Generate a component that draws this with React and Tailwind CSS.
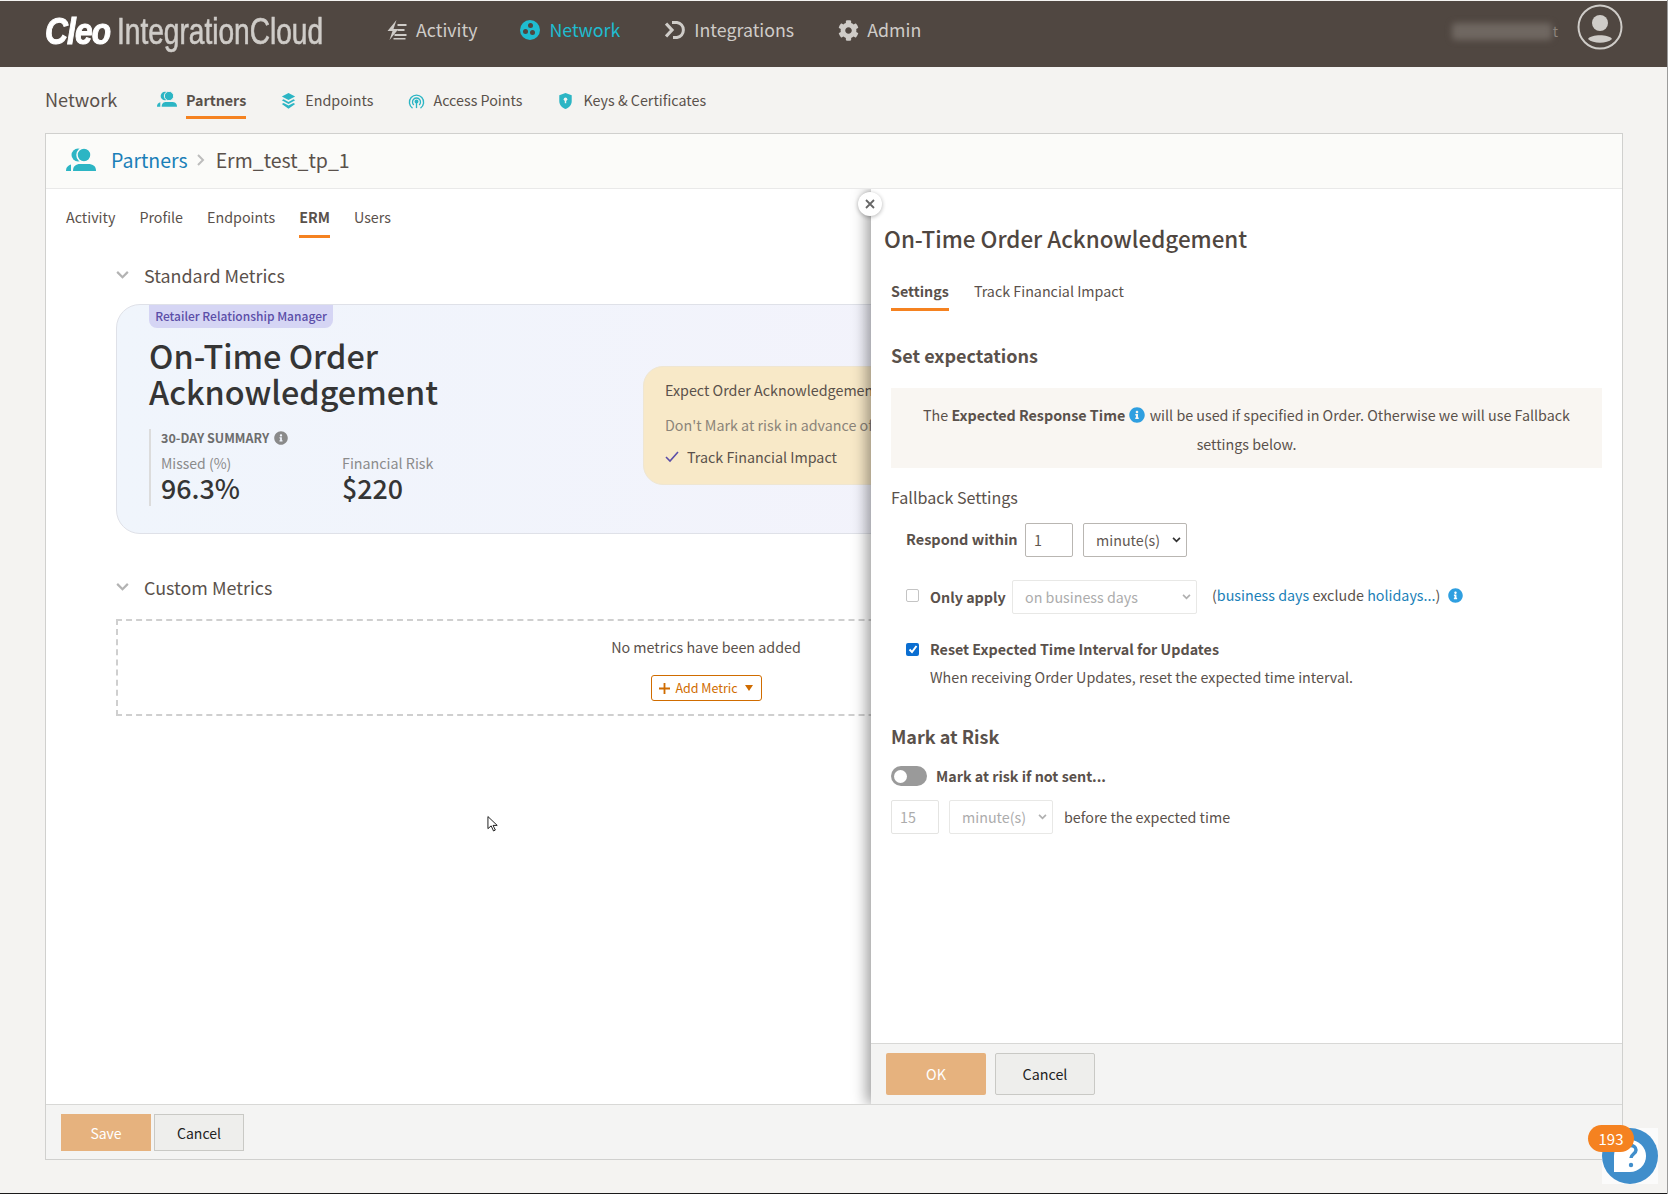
import React from "react";
import { FaCog, FaInfoCircle } from "react-icons/fa";

const ActivityIcon = () => (
  <svg viewBox="2 1 19 20" className="w-5 h-5" fill="#cfccc8">
    <path d="M11 1 2 12h5L4 21l9-11H8z" />
    <path d="M12 5h9v2h-9zM12 10h7v2h-7zM9 15h12v2H9zM8 19h12v1.6H8z" />
  </svg>
);

const NetworkIcon = () => (
  <svg viewBox="0 0 20 20" className="w-5 h-5">
    <circle cx="10" cy="10" r="10" fill="#1fbcd0" />
    <circle cx="10.5" cy="5.5" r="2.5" fill="#4f4640" />
    <circle cx="5.5" cy="11.5" r="2.5" fill="#4f4640" />
    <circle cx="12.5" cy="12.5" r="2.5" fill="#4f4640" />
  </svg>
);

const IntegrationsIcon = () => (
  <svg viewBox="0 0 22 20" className="w-[22px] h-5" fill="none" stroke="#cfccc8" strokeWidth="3">
    <path d="M1 3.5 7 10l-6 6.5" strokeWidth="3.2" />
    <path d="M7 2.5h5a7.6 7.6 0 0 1 0 15H8" />
  </svg>
);

const PartnersIcon = ({ className, bg }) => (
  <svg viewBox="0 0 30 23" className={className} fill="#2cb5c4">
    <circle cx="12" cy="7" r="6.500" />
    <ellipse cx="18" cy="7" rx="7" ry="7" stroke={bg} strokeWidth="1.500" />
    <path d="M0 23c0-3 1-5 5-6.500V23z" />
    <path d="M7 23c0-5 3-7 7-7h8c5 0 8 2 8 7z" />
  </svg>
);

const EndpointsIcon = () => (
  <svg viewBox="0 0 16 18" className="w-[15px] h-4" fill="#2cb5c4">
    <path d="M8 0l7.500 4L8 8 .5 4z" />
    <path d="M2.500 7 8 10l5.500-3 2 1.200L8 12.300.5 8.200z" />
    <path d="M2.500 11.200 8 14.200l5.500-3 2 1.100L8 17.800.5 12.300z" />
  </svg>
);

const AccessIcon = () => (
  <svg viewBox="0 0 18 18" className="w-[17px] h-4" fill="none" stroke="#2cb5c4" strokeWidth="1.500">
    <path d="M4.500 17A8 8 0 1 1 13.500 17" />
    <path d="M6 13.500a4.500 4.500 0 1 1 6 0" />
    <circle cx="9" cy="9.500" r="1.500" fill="#2cb5c4" />
    <path d="M9 11v6" />
  </svg>
);

const KeysIcon = () => (
  <svg viewBox="0 0 14 18" className="w-[13px] h-4">
    <path d="M7 0l7 2.500V9c0 4.500-3 7.500-7 9-4-1.500-7-4.500-7-9V2.500z" fill="#2cb5c4" />
    <circle cx="7" cy="7" r="2" fill="#f4f3f1" />
    <rect x="6.200" y="7.500" width="1.600" height="4" fill="#f4f3f1" />
  </svg>
);

const Chevron = () => (
  <svg viewBox="0 0 14 9" className="w-[13px] h-2" fill="none" stroke="#b3b3b3" strokeWidth="2.500">
    <path d="M1 1l6 6 6-6" />
  </svg>
);

const SelectBox = ({ value, width, disabled }) => (
  <div
    className={
      "h-[34px] flex items-center justify-between pl-3 pr-[5px] border rounded-[2px] " +
      width +
      (disabled ? " border-[#e8e8e6] text-[#acacac]" : " border-[#b9b6b2] text-[#5f5752]")
    }
  >
    <span>{value}</span>
    <svg viewBox="0 0 10 7" className="w-[9px] h-[6px]" fill="none" stroke={disabled ? "#b0b0b0" : "#333"} strokeWidth="2">
      <path d="M1 1l4 4 4-4" />
    </svg>
  </div>
);

const App = () => {
  return (
    <div className="relative w-[1668px] h-[1194px] overflow-hidden bg-[#f4f3f1] text-[14.3px] leading-[20px] text-[#5a514b] font-['Noto_Sans_CJK_SC',sans-serif] border-r border-[#9b9b9b]">
      {/* top nav */}
      <div className="mt-px h-[66px] bg-[#504741] flex items-start text-[17.8px] text-[#cfccc8]">
        <div className="ml-[45px] mt-[6px] w-[277px] h-[50px] flex items-center font-['Liberation_Sans',sans-serif] text-[36px] leading-[44px] whitespace-nowrap">
          <span className="w-[72px] text-white font-bold italic origin-left scale-x-[0.88] tracking-[-1px] [-webkit-text-stroke:1px_white]">Cleo</span>
          <span className="origin-left scale-x-[0.78] [-webkit-text-stroke:0.6px_#cfccc8]">IntegrationCloud</span>
        </div>
        <div className="ml-[65px] mt-[18px] flex items-center gap-[9px] h-[22px]">
          <ActivityIcon />
          <span className="-mt-[2px]">Activity</span>
        </div>
        <div className="ml-[43px] mt-[18px] flex items-center gap-[9px] h-[22px] text-[#1fbcd0]">
          <NetworkIcon />
          <span className="-mt-[2px]">Network</span>
        </div>
        <div className="ml-[45px] mt-[18px] flex items-center gap-[7px] h-[22px]">
          <IntegrationsIcon />
          <span className="-mt-[2px]">Integrations</span>
        </div>
        <div className="ml-[44px] mt-[18px] flex items-center gap-2 h-[22px]">
          <FaCog className="w-[21px] h-[21px]" />
          <span className="-mt-[2px]">Admin</span>
        </div>
        <div className="ml-auto mt-[22px] w-[100px] h-[17px] bg-[#6f6761] rounded-[4px] blur-[3px]"></div>
        <span className="mt-[20px] ml-px text-[#8f8882] text-[14px]">t</span>
        <svg viewBox="0 0 46 46" className="ml-[19px] mr-[44px] mt-[3px] w-[46px] h-[46px]">
          <circle cx="23" cy="23" r="21.500" fill="none" stroke="#cfccc8" strokeWidth="2" />
          <circle cx="23" cy="19" r="8" fill="#cfccc8" />
          <path d="M11 35c3-5 21-5 24 0-5 5-19 5-24 0z" fill="#cfccc8" />
        </svg>
      </div>

      {/* second nav */}
      <div className="h-[66px] pl-[45px] flex items-start">
        <span className="mt-[20px] w-[72px] text-[18.1px] leading-[24px]">Network</span>
        <div className="ml-[40px] mt-[24px] flex items-start gap-[9px]">
          <PartnersIcon bg="#f4f3f1" className="w-5 h-4" />
          <span className="font-bold leading-[18px] border-b-[3px] border-[#f58220] h-[28px] -mb-[4px]">Partners</span>
        </div>
        <div className="ml-[35px] mt-[24px] flex items-center gap-[9px]">
          <EndpointsIcon />
          <span className="-mt-[1px]">Endpoints</span>
        </div>
        <div className="ml-[35px] mt-[24px] flex items-center gap-[8px]">
          <AccessIcon />
          <span className="-mt-[1px]">Access Points</span>
        </div>
        <div className="ml-[37px] mt-[24px] flex items-center gap-[11px]">
          <KeysIcon />
          <span className="-mt-[1px]">Keys &amp; Certificates</span>
        </div>
      </div>

      {/* main card */}
      <div className="relative ml-[45px] w-[1578px] h-[1027px] border border-[#d0d0ce] flex flex-col bg-white">
        <div className="h-[55px] shrink-0 bg-[#fbfbf9] border-b border-[#e9e9e9] flex items-center pl-[20px] text-[19.5px] pb-[3px]">
          <PartnersIcon bg="#fbfbf9" className="w-[30px] h-[23px]" />
          <span className="ml-[15px] text-[#1a7fb8]">Partners</span>
          <svg viewBox="0 0 8 12" className="ml-[9px] w-2 h-3" fill="none" stroke="#bdbdbd" strokeWidth="2">
            <path d="M1 1l5 5-5 5" />
          </svg>
          <span className="ml-[11px]">Erm_test_tp_1</span>
        </div>

        <div className="flex-1 min-h-0 overflow-hidden">
          <div className="pl-[20px] h-[48px] pt-[18px] flex items-start gap-[24px]">
            <span>Activity</span>
            <span>Profile</span>
            <span>Endpoints</span>
            <span className="font-bold h-[31px] border-b-[3px] border-[#f58220]">ERM</span>
            <span>Users</span>
          </div>

          <div className="pl-[70px] mt-[25px] flex items-center h-[26px] text-[17.9px] leading-[26px]">
            <Chevron />
            <span className="ml-[15px]">Standard Metrics</span>
          </div>

          <div className="relative ml-[70px] mt-[16px] w-[1180px] h-[230px] rounded-[24px] border border-[#dfe1e8] bg-gradient-to-r from-[#f0f5fc] to-[#f4f2fb] pl-[32px] flex">
            <div className="w-[494px]">
              <div className="w-[184px] h-[23px] bg-[#d5d5f4] rounded-b-[8px] text-[#5b4ea8] text-[12px] font-medium leading-[22px] text-center whitespace-nowrap">
                Retailer Relationship Manager
              </div>
              <div className="mt-[9px] text-[32.4px] leading-[36px] font-medium text-[#353535] whitespace-nowrap">
                On-Time Order
                <br />
                Acknowledgement
              </div>
              <div className="mt-[20px] h-[77px] border-l-2 border-[#dcdcdc] pl-[10px]">
                <div className="flex items-center gap-[5px] text-[12.5px] font-bold text-[#6d6d6d] h-[18px]">
                  30-DAY SUMMARY
                  <FaInfoCircle className="w-[14px] h-[14px] text-[#8a8a8a]" />
                </div>
                <div className="mt-[7px] flex text-[14px] leading-[18px] text-[#8b8b8b]">
                  <div className="w-[181px]">
                    <div>Missed (%)</div>
                    <div className="text-[26.8px] leading-[30px] mt-[1px] font-medium text-[#353535]">96.3%</div>
                  </div>
                  <div>
                    <div className="text-[14.3px]">Financial Risk</div>
                    <div className="text-[26.8px] leading-[30px] mt-[1px] font-medium text-[#353535]">$220</div>
                  </div>
                </div>
              </div>
            </div>
            <div className="mt-[61px] w-[500px] h-[119px] rounded-[20px] bg-[#f8e9c8] border border-[#efe6d2] pl-[21px] pt-[13px]">
              <div>Expect Order Acknowledgement within 1 minute</div>
              <div className="mt-[15px] text-[#8b8479]">Don't Mark at risk in advance of expected time</div>
              <div className="mt-[12px] flex items-center gap-[8px]">
                <svg viewBox="0 0 14 12" className="w-[14px] h-3" fill="none" stroke="#5b4ea8" strokeWidth="1.600">
                  <path d="M1 6l4 4 8-9" />
                </svg>
                Track Financial Impact
              </div>
            </div>
          </div>

          <div className="pl-[70px] mt-[40px] flex items-center h-[26px] text-[17.9px] leading-[26px]">
            <Chevron />
            <span className="ml-[15px]">Custom Metrics</span>
          </div>

          <div className="ml-[70px] mt-[19px] w-[1180px] h-[97px] border-2 border-dashed border-[#cfcfcf] flex flex-col items-center pt-[16px]">
            <div>No metrics have been added</div>
            <div className="mt-[18px] w-[111px] h-[26px] flex items-center justify-center gap-[5px] rounded-[3px] border border-[#d06c00] text-[#d06c00] text-[12.5px]">
              <svg viewBox="0 0 12 12" className="w-[11px] h-[11px]" fill="none" stroke="#d06c00" strokeWidth="2">
                <path d="M6 0v12M0 6h12" />
              </svg>
              Add Metric
              <svg viewBox="0 0 8 6" className="ml-[2px] w-2 h-[6px]" fill="#d06c00">
                <path d="M0 0h8L4 6z" />
              </svg>
            </div>
          </div>
        </div>

        <div className="h-[55px] shrink-0 bg-[#f4f4f3] border-t border-[#d8d8d6] pl-[15px] pt-[9px] flex gap-[3px] items-start text-[14px]">
          <div className="w-[90px] h-[37px] bg-[#e6b27e] text-white flex items-center justify-center">Save</div>
          <div className="w-[90px] h-[37px] bg-[#eeeeec] border border-[#c9c9c5] text-[#222] flex items-center justify-center">Cancel</div>
        </div>

        {/* slide-over panel */}
        <div className="absolute left-[825px] top-[55px] w-[751px] bottom-[55px] bg-white shadow-[-4px_0_14px_rgba(0,0,0,0.4)] [clip-path:inset(0_0_0_-24px)] flex flex-col">
          <div className="absolute -left-[13px] top-[3px] w-[24px] h-[24px] rounded-full bg-white shadow-[0_1px_4px_rgba(0,0,0,0.3)] flex items-center justify-center">
            <svg viewBox="0 0 10 10" className="w-[10px] h-[10px]" fill="none" stroke="#666" strokeWidth="1.800">
              <path d="M1 1l8 8M9 1l-8 8" />
            </svg>
          </div>
          <div className="flex-1 min-h-0 pl-[13px]">
            <div className="mt-[33px] text-[22.4px] leading-[32px] font-medium text-[#4f4640]">On-Time Order Acknowledgement</div>
            <div className="pl-[7px]">
              <div className="mt-[27px] h-[38px] flex items-start gap-[25px]">
                <span className="font-bold h-[30px] border-b-[3px] border-[#f58220]">Settings</span>
                <span>Track Financial Impact</span>
              </div>
              <div className="mt-[22px] text-[18px] leading-[28px] font-bold">Set expectations</div>
              <div className="mt-[19px] w-[711px] h-[80px] bg-[#f9f6f2] text-center leading-[29px] pt-[12px] px-[20px]">
                The <b>Expected Response Time</b>{" "}
                <FaInfoCircle className="inline mx-[1px] w-4 h-4 text-[#2f9fe0] align-[-2px]" /> will be used if specified in Order. Otherwise we will use Fallback settings below.
              </div>
              <div className="mt-[17px] text-[16.1px] leading-[24px]">Fallback Settings</div>
              <div className="mt-[14px] pl-[15px] flex items-center">
                <span className="font-bold text-[14.5px] w-[119px] -mt-[2px] whitespace-nowrap">Respond within</span>
                <div className="w-[48px] h-[34px] border border-[#b9b6b2] rounded-[2px] pl-[8px] leading-[32px] text-[#5f5752]">1</div>
                <div className="ml-[10px]">
                  <SelectBox value="minute(s)" width="w-[104px]" />
                </div>
              </div>
              <div className="mt-[23px] pl-[15px] flex items-center">
                <div className="w-[13px] h-[13px] border border-[#c4c4c4] rounded-[2px] bg-white -mt-[4px]"></div>
                <span className="ml-[11px] font-bold w-[82px] whitespace-nowrap">Only apply</span>
                <SelectBox value="on business days" width="w-[185px]" disabled />
                <span className="ml-[15px] -mt-[4px] whitespace-nowrap">
                  (<span className="text-[#1a7fb8]">business days</span> exclude <span className="text-[#1a7fb8]">holidays...</span>)
                </span>
                <FaInfoCircle className="ml-[8px] -mt-[3px] w-[15px] h-[15px] text-[#2f9fe0]" />
              </div>
              <div className="mt-[25px] pl-[15px] flex items-center">
                <div className="w-[13px] h-[13px] rounded-[2px] bg-[#0a6ed1] flex items-center justify-center">
                  <svg viewBox="0 0 10 10" className="w-[10px] h-[10px]" fill="none" stroke="white" strokeWidth="2">
                    <path d="M1.500 5.500l2.500 2.500 4.500-6" />
                  </svg>
                </div>
                <span className="ml-[11px] font-bold">Reset Expected Time Interval for Updates</span>
              </div>
              <div className="mt-[8px] pl-[39px]">When receiving Order Updates, reset the expected time interval.</div>
              <div className="mt-[35px] text-[18px] leading-[28px] font-bold">Mark at Risk</div>
              <div className="mt-[16px] flex items-center">
                <div className="w-[36px] h-[20px] rounded-full bg-[#9a9a9a] pl-[3px] flex items-center">
                  <div className="w-[13px] h-[13px] rounded-full bg-white"></div>
                </div>
                <span className="ml-[9px] font-bold">Mark at risk if not sent...</span>
              </div>
              <div className="mt-[14px] flex items-center">
                <div className="w-[48px] h-[34px] border border-[#e4e4e2] rounded-[2px] pl-[8px] leading-[32px] text-[#acacac]">15</div>
                <div className="ml-[10px]">
                  <SelectBox value="minute(s)" width="w-[104px]" disabled />
                </div>
                <span className="ml-[11px]">before the expected time</span>
              </div>
            </div>
          </div>
          <div className="h-[61px] shrink-0 bg-[#f4f4f3] border-t border-[#d8d8d6] pl-[15px] pt-[9px] flex gap-[9px] items-start">
            <div className="w-[100px] h-[42px] rounded-[2px] bg-[#e6b27e] text-white flex items-center justify-center">OK</div>
            <div className="w-[100px] h-[42px] rounded-[2px] bg-[#eeeeec] border border-[#c9c9c5] text-[#222] flex items-center justify-center">Cancel</div>
          </div>
        </div>
      </div>

      {/* mouse cursor */}
      <svg viewBox="0 0 14 18" className="absolute left-[487px] top-[815px] w-[13px] h-[18px]" fill="white" stroke="#111" strokeWidth="1">
        <path d="M1 1v13l3.500-3 2.500 5.500 2-1L6.500 10.500H11z" />
      </svg>

      {/* help bubble */}
      <div className="absolute left-[1602px] top-[1128px] w-[56px] h-[56px] bg-[#fbfbfb]">
        <svg viewBox="0 0 56 56" className="w-[56px] h-[56px]">
          <circle cx="28" cy="28" r="28" fill="#408ecb" />
          <path d="M12 44V28a16 16 0 1 1 16 16z" fill="white" />
          <path d="M23 22c0-6 11-6 11 0 0 4-5 4-5 8" fill="none" stroke="#408ecb" strokeWidth="3.500" />
          <circle cx="29" cy="37" r="2.200" fill="#408ecb" />
        </svg>
      </div>
      <div className="absolute left-[1588px] top-[1125px] w-[46px] h-[27px] rounded-full bg-[#f58220] text-white text-[15px] leading-[27px] text-center">193</div>

      {/* taskbar edge */}
      <div className="absolute left-0 right-0 bottom-0 h-px bg-[#1a1a1a]"></div>
    </div>
  );
};

export default App;
